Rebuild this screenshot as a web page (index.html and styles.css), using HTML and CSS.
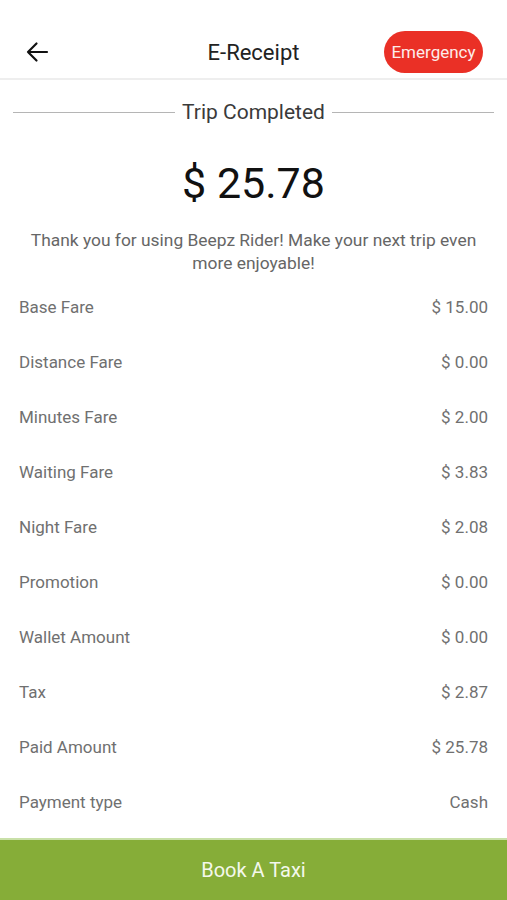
FILE: index.html
```html
<!DOCTYPE html>
<html lang="en">
<head>
    <meta charset="UTF-8">
    <meta name="viewport" content="width=device-width, initial-scale=1.0">
    <title>E-Receipt</title>
    <link rel="stylesheet" href="styles.css">
</head>
<body>
    <div id="screen">
        <!-- Top bar -->
        <div class="top-bar">
            <button class="back-button" aria-label="Back">
                <svg width="24" height="24" viewBox="0 0 24 24">
                    <path d="M22 12H3M11.5 3.5L3 12l8.5 8.5" fill="none" stroke="#111" stroke-width="2.2" stroke-linecap="round" stroke-linejoin="round"/>
                </svg>
            </button>
            <div class="top-title">E-Receipt</div>
            <button class="emergency-button">Emergency</button>
        </div>

        <!-- Summary -->
        <div class="summary">
            <div class="divider-title">
                <span class="line"></span>
                <span class="label">Trip Completed</span>
                <span class="line"></span>
            </div>
            <div class="total">$ 25.78</div>
            <p class="thanks">Thank you for using Beepz Rider! Make your next trip even more enjoyable!</p>
        </div>

        <!-- Fare breakdown -->
        <div class="fare-list">
            <div class="fare-row"><span>Base Fare</span><span>$ 15.00</span></div>
            <div class="fare-row"><span>Distance Fare</span><span>$ 0.00</span></div>
            <div class="fare-row"><span>Minutes Fare</span><span>$ 2.00</span></div>
            <div class="fare-row"><span>Waiting Fare</span><span>$ 3.83</span></div>
            <div class="fare-row"><span>Night Fare</span><span>$ 2.08</span></div>
            <div class="fare-row"><span>Promotion</span><span>$ 0.00</span></div>
            <div class="fare-row"><span>Wallet Amount</span><span>$ 0.00</span></div>
            <div class="fare-row"><span>Tax</span><span>$ 2.87</span></div>
            <div class="fare-row"><span>Paid Amount</span><span>$ 25.78</span></div>
            <div class="fare-row"><span>Payment type</span><span>Cash</span></div>
        </div>

        <!-- Book button -->
        <button class="book-button">Book A Taxi</button>
    </div>
</body>
</html>
```

FILE: styles.css
```css
* {
    margin: 0;
    padding: 0;
    box-sizing: border-box;
}

body {
    font-family: Roboto, 'Noto Sans', sans-serif;
    background: #ffffff;
}

#screen {
    width: 507px;
    height: 900px;
    display: flex;
    flex-direction: column;
}

/* Top bar */
.top-bar {
    height: 80px;
    padding: 26px 24px 0 24px;
    display: flex;
    align-items: center;
    justify-content: space-between;
    border-bottom: 2px solid #eeeeee;
    position: relative;
}

.back-button {
    background: none;
    border: none;
    width: 26px;
    height: 26px;
    display: flex;
    align-items: center;
    justify-content: center;
}

.top-title {
    position: absolute;
    left: 0;
    right: 0;
    top: 26px;
    bottom: 0;
    display: flex;
    align-items: center;
    justify-content: center;
    font-size: 22px;
    color: #222;
    pointer-events: none;
}

.emergency-button {
    background: #ea3026;
    color: #fdecea;
    border: none;
    border-radius: 21px;
    height: 42px;
    width: 99px;
    font-family: Roboto, sans-serif;
    font-size: 17px;
}

/* Summary */
.summary {
    text-align: center;
    padding: 20px 13px 0 13px;
}

.divider-title {
    display: flex;
    align-items: center;
    gap: 7px;
}

.divider-title .line {
    flex: 1;
    height: 1px;
    background: #b5b5b5;
}

.divider-title .label {
    font-size: 21px;
    line-height: 24px;
    color: #3a3a3a;
}

.total {
    font-size: 43px;
    line-height: 48px;
    color: #111;
    margin-top: 35px;
}

.thanks {
    font-size: 17.4px;
    line-height: 23px;
    color: #666;
    margin: 22px 2px 0 2px;
}

/* Fare breakdown */
.fare-list {
    margin-top: 4px;
    padding: 0 19px;
}

.fare-row {
    height: 55px;
    display: flex;
    align-items: center;
    justify-content: space-between;
    font-size: 17px;
    color: #707070;
}

/* Book button */
.book-button {
    margin-top: auto;
    height: 62px;
    width: 100%;
    background: #86ad38;
    border: none;
    border-top: 2px solid #c9e0a8;
    color: #f4f8ec;
    font-family: Roboto, sans-serif;
    font-size: 20px;
}
```
